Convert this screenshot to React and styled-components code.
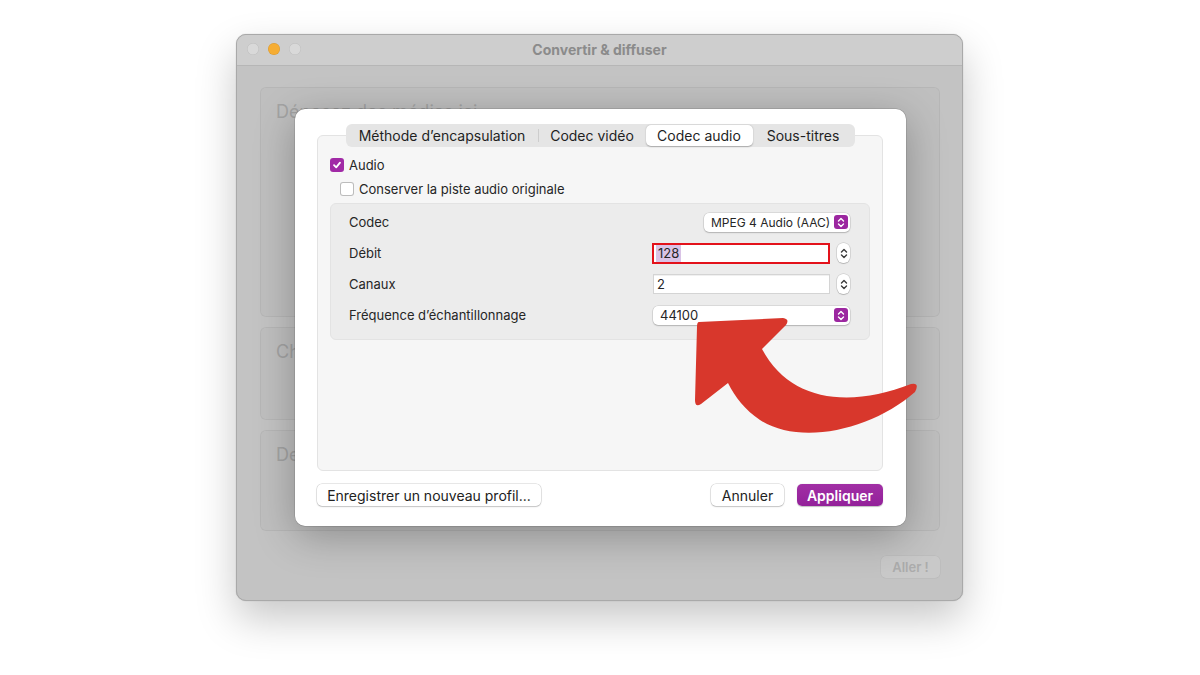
import React from 'react';
import styled, { createGlobalStyle } from 'styled-components';

const GlobalStyle = createGlobalStyle`
  html, body {
    margin: 0;
    background: #ffffff;
    font-family: 'Inter', 'Noto Sans', sans-serif;
    -webkit-font-smoothing: antialiased;
  }
  * { box-sizing: border-box; }
`

const Page = styled.div`
  position: relative;
  width: 1200px;
  height: 675px;
  padding: 34px 0 0 236px;
  overflow: hidden;
`

const Window = styled.div`
  position: relative;
  width: 727px;
  height: 567px;
  border-radius: 10px;
  background: #c3c3c3;
  border: 1px solid #a9a9a9;
  box-shadow: 0 18px 40px rgba(0,0,0,0.22), 0 0 1px rgba(0,0,0,0.3);
  display: flex;
  flex-direction: column;
  overflow: hidden;
`

const TitleBar = styled.div`
  height: 31px;
  flex-shrink: 0;
  display: grid;
  grid-template-columns: 1fr auto 1fr;
  align-items: center;
  padding: 0 10px 2px;
  background: #cecece;
  border-bottom: 1px solid #b6b6b6;
`

const Lights = styled.div`
  display: flex;
  gap: 9px;
`

const Light = styled.span`
  width: 12px;
  height: 12px;
  border-radius: 50%;
  background: ${p => p.$on ? '#f6ad33' : '#d9d9d9'};
  box-shadow: inset 0 0 0 0.5px rgba(0,0,0,0.12);
`

const Title = styled.div`
  font-size: 14px;
  font-weight: 700;
  color: #8b8b8b;
`

const WindowBody = styled.div`
  flex: 1;
  display: flex;
  flex-direction: column;
  gap: 10px;
  padding: 21px 22px 0 23px;
`

const DropPanel = styled.div`
  height: ${p => p.$h}px;
  border-radius: 6px;
  background: rgba(0,0,0,0.015);
  border: 1px solid rgba(0,0,0,0.05);
  padding: 13px 15px;
  font-size: 18px;
  color: #a3a3a3;
`

const WindowFooter = styled.div`
  display: flex;
  justify-content: flex-end;
  margin-top: 15px;
`

const GhostButton = styled.div`
  width: 59px;
  height: 22px;
  border-radius: 5px;
  background: #c9c9c9;
  box-shadow: 0 0 0 0.5px rgba(0,0,0,0.06);
  display: flex;
  align-items: center;
  justify-content: center;
  font-size: 13px;
  font-weight: 600;
  color: #acacac;
`

const Sheet = styled.div`
  position: absolute;
  left: 58px;
  top: 74px;
  width: 611px;
  height: 417px;
  border-radius: 10px;
  background: #ffffff;
  box-shadow: 0 10px 40px rgba(0,0,0,0.28), 0 0 0 0.5px rgba(0,0,0,0.2);
  padding: 15px 23px 20px 22px;
  display: flex;
  flex-direction: column;
`

const TabView = styled.div`
  flex: 1;
  display: flex;
  flex-direction: column;
  align-items: center;
`

const TabBar = styled.div`
  position: relative;
  z-index: 1;
  height: 23px;
  margin-bottom: -12px;
  display: flex;
  align-items: center;
  padding: 0 1px;
  border-radius: 6px;
  background: #e5e5e5;
`

const Tab = styled.div`
  width: ${p => p.$w}px;
  height: 21px;
  display: flex;
  align-items: center;
  justify-content: center;
  font-size: 14px;
  color: #1f1f1f;
  border-radius: 5px;
  background: ${p => p.$active ? '#ffffff' : 'transparent'};
  box-shadow: ${p => p.$active ? '0 0.5px 1.5px rgba(0,0,0,0.28)' : 'none'};
`

const TabDivider = styled.span`
  width: 1px;
  height: 13px;
  background: #cdcdcd;
`

const TabPanel = styled.div`
  align-self: stretch;
  flex: 1;
  border-radius: 6px;
  background: #f6f6f6;
  border: 1px solid #e3e3e3;
  padding: 22px 12px 12px 12px;
  display: flex;
  flex-direction: column;
`

const CheckRow = styled.label`
  display: flex;
  align-items: center;
  gap: 5px;
  height: 14px;
  margin-left: ${p => p.$indent || 0}px;
  margin-top: ${p => p.$top || 0}px;
  font-size: 13px;
  color: #262626;
`

const Box = styled.span`
  width: 14px;
  height: 14px;
  border-radius: 3px;
  display: flex;
  align-items: center;
  justify-content: center;
  background: ${p => p.$checked ? '#a12aa6' : '#ffffff'};
  box-shadow: ${p => p.$checked ? 'none' : 'inset 0 0 0 1px #bcbcbc'};
`

const Group = styled.div`
  margin-top: 7px;
  border-radius: 6px;
  background: #ececec;
  border: 1px solid #e3e3e3;
  padding: 7px 19px 13px 18px;
  display: grid;
  row-gap: 9px;
`

const Row = styled.div`
  height: 22px;
  display: flex;
  align-items: center;
  justify-content: space-between;
`

const Label = styled.span`
  font-size: 13px;
  color: #262626;
`

const Controls = styled.div`
  display: flex;
  align-items: center;
  gap: 7px;
`

const PopUp = styled.div`
  width: ${p => p.$w}px;
  height: 19px;
  border-radius: 5px;
  background: #ffffff;
  box-shadow: 0 0 0 0.5px rgba(0,0,0,0.15), 0 1px 1.5px rgba(0,0,0,0.18);
  display: flex;
  align-items: center;
  justify-content: space-between;
  padding: 0 2px 0 ${p => p.$pad}px;
  font-size: ${p => p.$small ? 12 : 13}px;
  white-space: nowrap;
  color: #262626;
`

const PurpleKnob = styled.span`
  width: 14px;
  height: 14px;
  flex-shrink: 0;
  border-radius: 3px;
  background: #9c27a0;
  display: flex;
  align-items: center;
  justify-content: center;
`

const Field = styled.div`
  width: ${p => p.$w}px;
  height: ${p => p.$focus ? 21 : 20}px;
  background: #ffffff;
  border: ${p => p.$focus ? '2px solid #e3121b' : '1px solid #d4d4d4'};
  box-shadow: ${p => p.$focus ? 'none' : 'inset 0 1px 0 rgba(0,0,0,0.06)'};
  display: flex;
  align-items: center;
  padding-left: ${p => p.$focus ? 2 : 3}px;
  font-size: 13px;
  color: #262626;
`

const Selected = styled.span`
  background: #d9c3e6;
  padding: 0 2px;
  line-height: 17px;
`

const Stepper = styled.span`
  width: 13px;
  height: 20px;
  border-radius: 6px;
  background: #ffffff;
  box-shadow: 0 0 0 0.5px rgba(0,0,0,0.18), 0 1px 1px rgba(0,0,0,0.15);
  display: flex;
  align-items: center;
  justify-content: center;
`

const ButtonRow = styled.div`
  display: flex;
  align-items: center;
  margin-top: 13px;
  gap: 13px;
`

const Spacer = styled.div`
  flex: 1;
`

const Button = styled.button`
  width: ${p => p.$w}px;
  height: 22px;
  border: none;
  border-radius: 5px;
  font-family: inherit;
  font-size: 14px;
  font-weight: ${p => p.$primary ? 600 : 400};
  color: ${p => p.$primary ? '#ffffff' : '#222222'};
  background: ${p => p.$primary ? 'linear-gradient(#a12fa5, #93219a)' : '#ffffff'};
  box-shadow: ${p => p.$primary
    ? '0 0.5px 1px rgba(0,0,0,0.25)'
    : '0 0 0 0.5px rgba(0,0,0,0.18), 0 1px 1.5px rgba(0,0,0,0.16)'};
  padding: 0;
`

const Overlay = styled.svg`
  position: absolute;
  left: 0;
  top: 0;
  pointer-events: none;
`

const Check = () => (
  <svg width="10" height="10" viewBox="0 0 10 10">
    <path d="M2 5.2 L4.2 7.4 L8 2.6" fill="none" stroke="#fff" strokeWidth="1.8" strokeLinecap="round" strokeLinejoin="round" />
  </svg>
)

const UpDown = ({ color = '#fff', w = 8, h = 11 }) => (
  <svg width={w} height={h} viewBox="0 0 8 11">
    <path d="M1.5 4 L4 1.6 L6.5 4 M1.5 7 L4 9.4 L6.5 7" fill="none" stroke={color} strokeWidth="1.4" strokeLinecap="round" strokeLinejoin="round" />
  </svg>
)

const App = () => {
  return (
    <Page>
      <GlobalStyle />
      <Window>
        <TitleBar>
          <Lights>
            <Light />
            <Light $on />
            <Light />
          </Lights>
          <Title>Convertir &amp; diffuser</Title>
          <span />
        </TitleBar>
        <WindowBody>
          <DropPanel $h={230}>Déposez des médias ici</DropPanel>
          <DropPanel $h={93}>Choisir un profil</DropPanel>
          <DropPanel $h={101}>Destination</DropPanel>
          <WindowFooter>
            <GhostButton>Aller !</GhostButton>
          </WindowFooter>
        </WindowBody>

        <Sheet>
          <TabView>
            <TabBar>
              <Tab $w={191}>Méthode d’encapsulation</Tab>
              <TabDivider />
              <Tab $w={107}>Codec vidéo</Tab>
              <Tab $w={107} $active>Codec audio</Tab>
              <Tab $w={101}>Sous-titres</Tab>
            </TabBar>
            <TabPanel>
              <CheckRow>
                <Box $checked><Check /></Box>
                Audio
              </CheckRow>
              <CheckRow $indent={10} $top={10}>
                <Box />
                Conserver la piste audio originale
              </CheckRow>
              <Group>
                <Row>
                  <Label>Codec</Label>
                  <PopUp $w={146} $pad={7} $small>
                    MPEG 4 Audio (AAC)
                    <PurpleKnob><UpDown /></PurpleKnob>
                  </PopUp>
                </Row>
                <Row>
                  <Label>Débit</Label>
                  <Controls>
                    <Field $w={178} $focus><Selected>128</Selected></Field>
                    <Stepper><UpDown color="#3a3a3a" /></Stepper>
                  </Controls>
                </Row>
                <Row>
                  <Label>Canaux</Label>
                  <Controls>
                    <Field $w={177}>2</Field>
                    <Stepper><UpDown color="#3a3a3a" /></Stepper>
                  </Controls>
                </Row>
                <Row>
                  <Label>Fréquence d’échantillonnage</Label>
                  <PopUp $w={197} $pad={7}>
                    44100
                    <PurpleKnob><UpDown /></PurpleKnob>
                  </PopUp>
                </Row>
              </Group>
            </TabPanel>
          </TabView>
          <ButtonRow>
            <Button $w={224}>Enregistrer un nouveau profil...</Button>
            <Spacer />
            <Button $w={73}>Annuler</Button>
            <Button $w={86} $primary>Appliquer</Button>
          </ButtonRow>
        </Sheet>
      </Window>

      <Overlay width="1200" height="675" viewBox="0 0 1200 675">
        <path
          d="M699 322 L783 318 Q790 319 786 325 L762 349 C790 402 850 408 911 384 Q920 382 915 392 C872 430 800 446 760 420 C745 410 735 397 728 383 L701 404 Q695 408 695 400 L697 327 Q697 322 699 322 Z"
          fill="#d8372c"
        />
      </Overlay>
    </Page>
  );
};

export default App;
